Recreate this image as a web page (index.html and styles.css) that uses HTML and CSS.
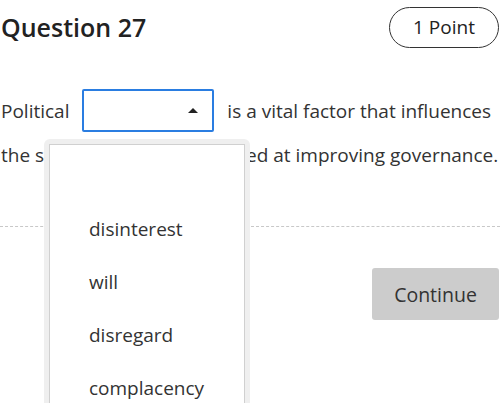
FILE: index.html
```html
<!DOCTYPE html>
<html>
<head>
<meta charset="utf-8">
<link rel="stylesheet" href="styles.css">
</head>
<body>
<div class="page">
  <header class="head">
    <h1 class="title">Question 27</h1>
    <span class="pill">1 Point</span>
  </header>
  <p class="stem">Political <span class="select"><span class="caret"></span></span> is a vital factor that influences the success of schemes aimed at improving governance.</p>
  <hr class="divider">
  <div class="actions"><button class="continue">Continue</button></div>
  <div class="dropdown">
    <ul class="options">
      <li>disinterest</li>
      <li>will</li>
      <li>disregard</li>
      <li>complacency</li>
    </ul>
  </div>
</div>
</body>
</html>
```
FILE: styles.css
```css
html, body {
  margin: 0;
  padding: 0;
  background: #fff;
}
body {
  width: 500px;
  height: 403px;
  overflow: hidden;
  font-family: "Open Sans", "Noto Sans", sans-serif;
  color: #333;
}
.page {
  position: relative;
  padding: 7px 1px 0 1px;
}
.head {
  display: flex;
  justify-content: space-between;
  align-items: center;
  height: 40px;
}
.title {
  margin: 0;
  font-size: 25px;
  font-weight: 600;
  color: #222;
}
.pill {
  display: flex;
  align-items: center;
  justify-content: center;
  box-sizing: border-box;
  width: 110px;
  height: 41px;
  border: 1.5px solid #333;
  border-radius: 21px;
  font-size: 19px;
  font-weight: 500;
  color: #222;
}
.stem {
  margin: 43px 0 0 0;
  font-size: 19px;
  line-height: 43px;
}
.select {
  display: inline-block;
  box-sizing: border-box;
  width: 132px;
  height: 43px;
  margin: 0 8px;
  border: 2px solid #2a7de1;
  border-radius: 2px;
  vertical-align: middle;
  position: relative;
  top: -2px;
}
.caret {
  position: absolute;
  right: 14px;
  top: 17px;
  width: 0;
  height: 0;
  border-left: 5px solid transparent;
  border-right: 5px solid transparent;
  border-bottom: 5px solid #222;
}
.divider {
  margin: 49px -1px 0 -1px;
  border: 0;
  border-top: 1px dashed #c8c8c8;
}
.actions {
  display: flex;
  justify-content: flex-end;
  margin-top: 41px;
}
.continue {
  width: 127px;
  height: 52px;
  border: 0;
  border-radius: 3px;
  background: #cccccc;
  font-family: inherit;
  font-size: 19.5px;
  color: #333;
}
.dropdown {
  position: absolute;
  left: 44px;
  top: 139px;
  width: 196px;
  height: 280px;
  padding: 5px 5px 0 5px;
  background: #efefef;
  border-radius: 6px;
}
.options {
  box-sizing: border-box;
  height: 100%;
  margin: 0;
  padding: 58px 0 0 39px;
  list-style: none;
  background: #fff;
  border: 1px solid #d0d0d0;
  font-size: 19px;
  color: #333;
}
.options li {
  height: 53px;
  line-height: 53px;
}
```
